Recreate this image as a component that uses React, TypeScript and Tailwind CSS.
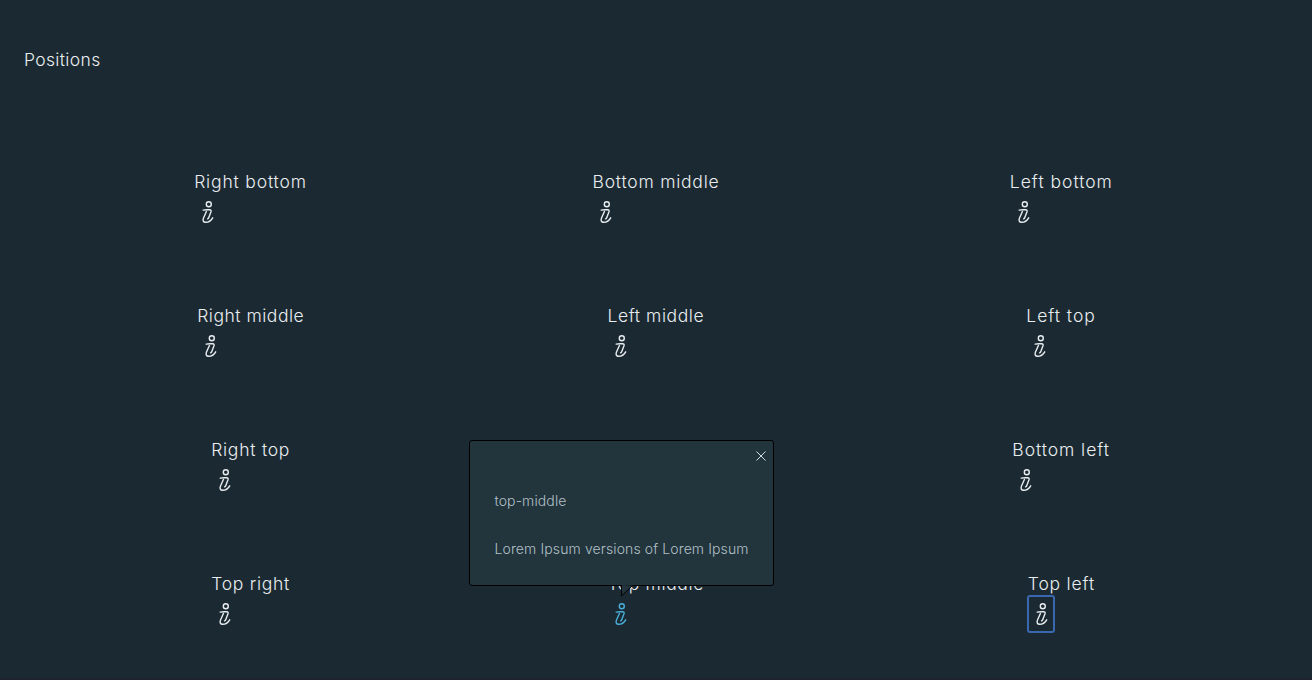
import React from 'react';

type Item = { label: string; width: string; tracking: string; state?: 'open' | 'focus' };

const items: Item[] = [
  { label: 'Right bottom', width: 'w-[113px]', tracking: 'tracking-[0.84px]' },
  { label: 'Bottom middle', width: 'w-[127px]', tracking: 'tracking-[0.78px]' },
  { label: 'Left bottom', width: 'w-[103px]', tracking: 'tracking-[0.98px]' },
  { label: 'Right middle', width: 'w-[107px]', tracking: 'tracking-[0.52px]' },
  { label: 'Left middle', width: 'w-[97px]', tracking: 'tracking-[0.56px]' },
  { label: 'Left top', width: 'w-[70px]', tracking: 'tracking-[0.95px]' },
  { label: 'Right top', width: 'w-[79px]', tracking: 'tracking-[0.76px]' },
  { label: '', width: 'w-[98px]', tracking: 'tracking-[0.2px]' },
  { label: 'Bottom left', width: 'w-[98px]', tracking: 'tracking-[0.94px]' },
  { label: 'Top right', width: 'w-[79px]', tracking: 'tracking-[0.74px]' },
  { label: 'Top middle', width: 'w-[97px]', tracking: 'tracking-[0.62px]', state: 'open' },
  { label: 'Top left', width: 'w-[67px]', tracking: 'tracking-[0.8px]', state: 'focus' },
];

function InfoIcon() {
  return (
    <svg className="shrink-0" width="24" height="24" viewBox="0 0 24 24" fill="none" stroke="currentColor" strokeWidth="1.4" strokeLinecap="round" strokeLinejoin="round">
      <circle cx="13.8" cy="4.300" r="2.5" />
      <path d="M8.200 10.100C9.500 9.800 11 9.700 12 9.700H14.500C15.900 9.700 16.400 10.400 16 11.700L13.800 17.500C13.500 18.300 13.300 18.600 12.600 18.800" />
      <path d="M11.400 11.500L8.500 18C7.500 20.500 8.400 22.300 10.500 22.300C13.800 22.300 16.300 20.300 17.700 17.800" />
    </svg>
  );
}

function Signpost() {
  return (
    <div className="absolute bottom-[46px] left-[-138px] h-[146px] w-[305px] rounded-[3px] border border-black bg-[#22343c] px-6 text-left text-sm font-light tracking-[0.12px] text-[#b2c0c8]">
      <svg className="absolute top-[10px] right-[7px]" width="10" height="10" viewBox="0 0 10 10" stroke="#d5dde1" strokeWidth="1">
        <path d="M.5.5l9 9M9.500.5l-9 9" />
      </svg>
      <p className="mt-12 h-6 leading-6">top-middle</p>
      <p className="mt-6 h-6 leading-6 whitespace-nowrap">Lorem Ipsum versions of Lorem Ipsum</p>
      <svg className="absolute top-[143px] left-[151px]" width="13" height="13" viewBox="0 0 13 13">
        <path d="M0 0H13V1H0z" fill="#22343c" />
        <path d="M.5 1v11L11.500 1.500" stroke="black" fill="#22343c" strokeLinejoin="bevel" />
      </svg>
    </div>
  );
}

export default function App() {
  return (
    <main className="h-[680px] overflow-hidden border-b-2 border-[#21222f] bg-[#1b2a32] font-['Inter',sans-serif] text-[17.5px] font-light text-[#eaedf0]">
      <h4 className="px-6 pt-12 leading-6 tracking-[0.35px]">Positions</h4>
      <div className="mt-[98px] grid auto-rows-[134px] grid-cols-3 px-12">
        {items.map((item) => (
          <div key={item.label} className="flex justify-center">
            {item.label !== '' && (
              <div className={item.width}>
                <div className={`h-6 leading-6 whitespace-nowrap ${item.tracking}`}>{item.label}</div>
                <button className={`relative flex h-9 w-[26px] items-center justify-center ${item.state === 'focus' ? 'rounded-[2px] outline-2 -outline-offset-1 outline-[#3a68b0]' : ''} ${item.state === 'open' ? 'text-[#49afd9]' : ''}`}>
                  <InfoIcon />
                  {item.state === 'open' && <Signpost />}
                </button>
              </div>
            )}
          </div>
        ))}
      </div>
    </main>
  );
}
